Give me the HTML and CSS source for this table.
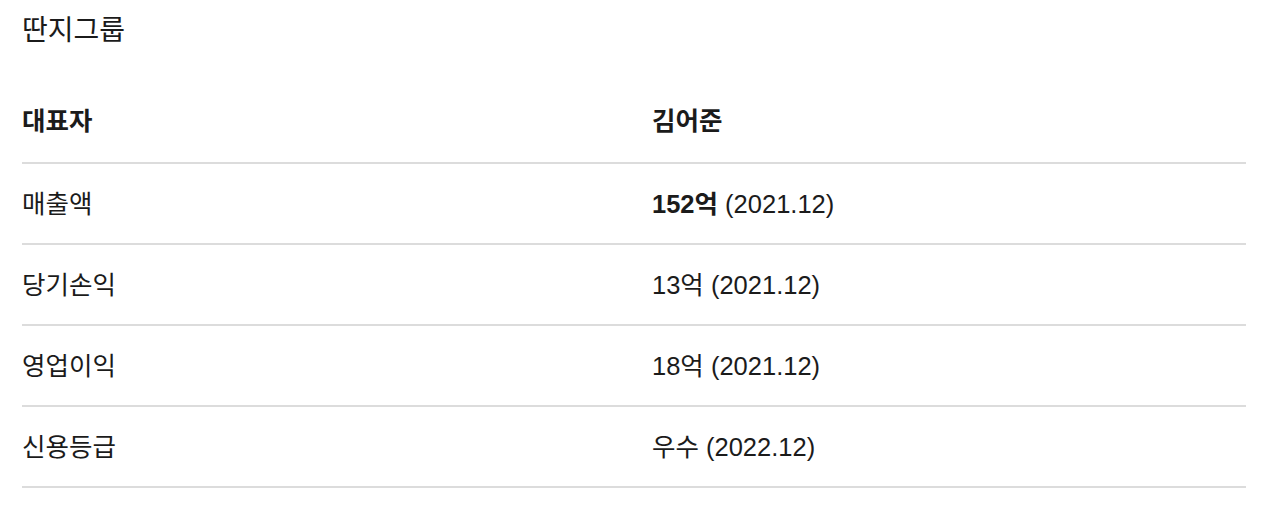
FILE: index.html
```html
<!DOCTYPE html>
<html lang="ko">
<head>
<meta charset="utf-8">
<link rel="stylesheet" href="styles.css">
</head>
<body>
<div class="page">
  <h1 class="title">딴지그룹</h1>
  <div class="table">
    <div class="row head">
      <div class="label">대표자</div>
      <div class="value">김어준</div>
    </div>
    <div class="row">
      <div class="label">매출액</div>
      <div class="value"><strong>152억</strong> (2021.12)</div>
    </div>
    <div class="row">
      <div class="label">당기손익</div>
      <div class="value">13억 (2021.12)</div>
    </div>
    <div class="row">
      <div class="label">영업이익</div>
      <div class="value">18억 (2021.12)</div>
    </div>
    <div class="row">
      <div class="label">신용등급</div>
      <div class="value">우수 (2022.12)</div>
    </div>
  </div>
</div>
</body>
</html>
```

FILE: styles.css
```css
html, body {
  margin: 0;
  padding: 0;
  background: #fff;
}
body {
  font-family: "Liberation Sans", "Noto Sans CJK KR", sans-serif;
  color: #1b1b1b;
}
.page {
  padding: 0 34px 0 22px;
}
.title {
  margin: 0;
  height: 62px;
  line-height: 62px;
  font-size: 28px;
  font-weight: normal;
  margin-bottom: 21px;
}
.table {
  display: flex;
  flex-direction: column;
}
.row {
  display: grid;
  grid-template-columns: 630px 1fr;
  align-items: center;
  box-sizing: border-box;
  height: 81px;
  padding-bottom: 4px;
  border-bottom: 2px solid #dcdcdc;
  font-size: 25.5px;
}
.head {
  font-weight: bold;
  padding-bottom: 9px;
}
.value strong {
  font-weight: bold;
}
```
